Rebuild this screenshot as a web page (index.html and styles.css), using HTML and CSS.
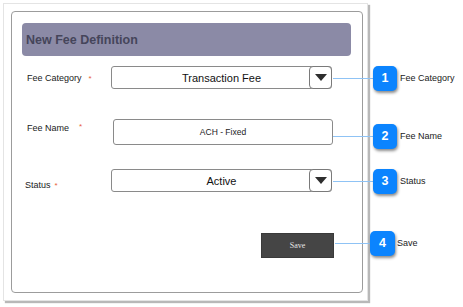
FILE: index.html
```html
<!DOCTYPE html>
<html>
<head>
<meta charset="utf-8">
<link rel="stylesheet" href="styles.css">
</head>
<body>
<div class="page">
  <div class="frame">
    <div class="panel">
      <div class="header">New Fee Definition</div>
      <div class="row row-cat">
        <div class="label">Fee Category<span class="req req-cat">*</span></div>
        <div class="select"><span class="select-text">Transaction Fee</span><span class="drop"><span class="tri"></span></span></div>
      </div>
      <div class="row row-name">
        <div class="label">Fee Name<span class="req req-name">*</span></div>
        <div class="input">ACH - Fixed</div>
      </div>
      <div class="row row-status">
        <div class="label">Status<span class="req req-status">*</span></div>
        <div class="select"><span class="select-text">Active</span><span class="drop"><span class="tri"></span></span></div>
      </div>
      <div class="row row-save">
        <button class="save">Save</button>
      </div>
    </div>
  </div>

  <div class="callout c1"><span class="line"></span><span class="badge">1</span><span class="ctext">Fee Category</span></div>
  <div class="callout c2"><span class="line"></span><span class="badge">2</span><span class="ctext">Fee Name</span></div>
  <div class="callout c3"><span class="line"></span><span class="badge">3</span><span class="ctext">Status</span></div>
  <div class="callout c4"><span class="line"></span><span class="badge">4</span><span class="ctext">Save</span></div>
</div>
</body>
</html>
```

FILE: styles.css
```css
* { box-sizing: border-box; }
html, body { margin: 0; padding: 0; background: #fff; }
body { font-family: "Liberation Sans", Arial, sans-serif; color: #222; }

.page { position: relative; width: 463px; height: 307px; overflow: hidden; }

.frame {
  margin: 3px 0 0 3px;
  width: 365px;
  height: 298px;
  border: 1px solid #e4e4e4;
  box-shadow: 2px 2px 1px #b8b8b8;
  padding: 7px 0 0 7px;
  background: #fff;
}

.panel {
  width: 352px;
  height: 282px;
  border: 1px solid #9c9c9c;
  border-radius: 4px;
  padding: 0;
}

.header {
  margin: 11px 11px 0 10px;
  height: 33px;
  background: #8b8aa6;
  border-radius: 4px;
  padding-left: 4px;
  display: flex;
  align-items: center;
  font-weight: bold;
  font-size: 12.5px;
  color: #45455a;
}

.row {
  display: grid;
  grid-template-columns: 99px 221px;
}
.row-cat { margin-top: 10px; align-items: center; }
.row-name { margin-top: 30px; }
.row-status { margin-top: 24px; }
.row-save { margin-top: 41px; display: flex; }

.label {
  padding-left: 15px;
  font-size: 9px;
  color: #1a1a1a;
}
.row-name .label { padding-top: 4px; }
.row-status .label { padding-top: 11px; padding-left: 13px; }

.req { color: #e8603c; font-size: 8px; }
.req-cat { margin-left: 7px; }
.req-name { margin-left: 10px; position: relative; top: -2px; }
.req-status { margin-left: 4px; }

.select {
  height: 23px;
  border: 1px solid #8a8a8a;
  border-radius: 3px;
  display: flex;
  align-items: stretch;
  background: #fff;
}
.select-text {
  flex: 1;
  padding-left: 22px;
  display: flex;
  align-items: center;
  justify-content: center;
  font-size: 11px;
  color: #111;
}
.drop {
  width: 23px;
  margin: -1px -1px -1px 0;
  border: 1.5px solid #7a7a7a;
  border-radius: 4px;
  display: flex;
  align-items: center;
  justify-content: center;
  background: #fff;
}
.tri {
  width: 0; height: 0;
  border-left: 6px solid transparent;
  border-right: 6px solid transparent;
  border-top: 7px solid #2e2e2e;
}

.input {
  margin-left: 2px;
  width: 220px;
  height: 26px;
  border: 1px solid #8a8a8a;
  border-radius: 3px;
  display: flex;
  align-items: center;
  justify-content: center;
  font-size: 8.5px;
  color: #222;
}

.save {
  -webkit-appearance: none;
  appearance: none;
  margin-left: 249px;
  width: 73px;
  height: 25px;
  background: #454545;
  border: 1px solid #3a3a3a;
  border-radius: 0;
  color: #e6e6e6;
  font-family: "Liberation Serif", "Times New Roman", serif;
  font-size: 8px;
  padding: 0;
}

.callout {
  position: absolute;
  display: flex;
  align-items: center;
  height: 26px;
}
.line { height: 1px; background: #8fc3f5; }
.badge {
  width: 24px;
  height: 25px;
  background: #0b84fe;
  border-radius: 5px;
  box-shadow: 1px 2px 3px rgba(0,0,0,0.45);
  color: #fff;
  font-weight: bold;
  font-size: 12.5px;
  display: flex;
  align-items: center;
  justify-content: center;
}
.ctext { font-size: 9px; color: #1a1a1a; margin-left: 3px; }

.c1 { left: 333px; top: 65px; }
.c1 .line { width: 40px; }
.c2 { left: 333px; top: 123px; }
.c2 .line { width: 40px; }
.c3 { left: 333px; top: 168px; }
.c3 .line { width: 40px; }
.c4 { left: 335px; top: 230px; }
.c4 .line { width: 35px; }
.c4 .badge { width: 25px; }
.c4 .ctext { margin-left: 2px; }
```
